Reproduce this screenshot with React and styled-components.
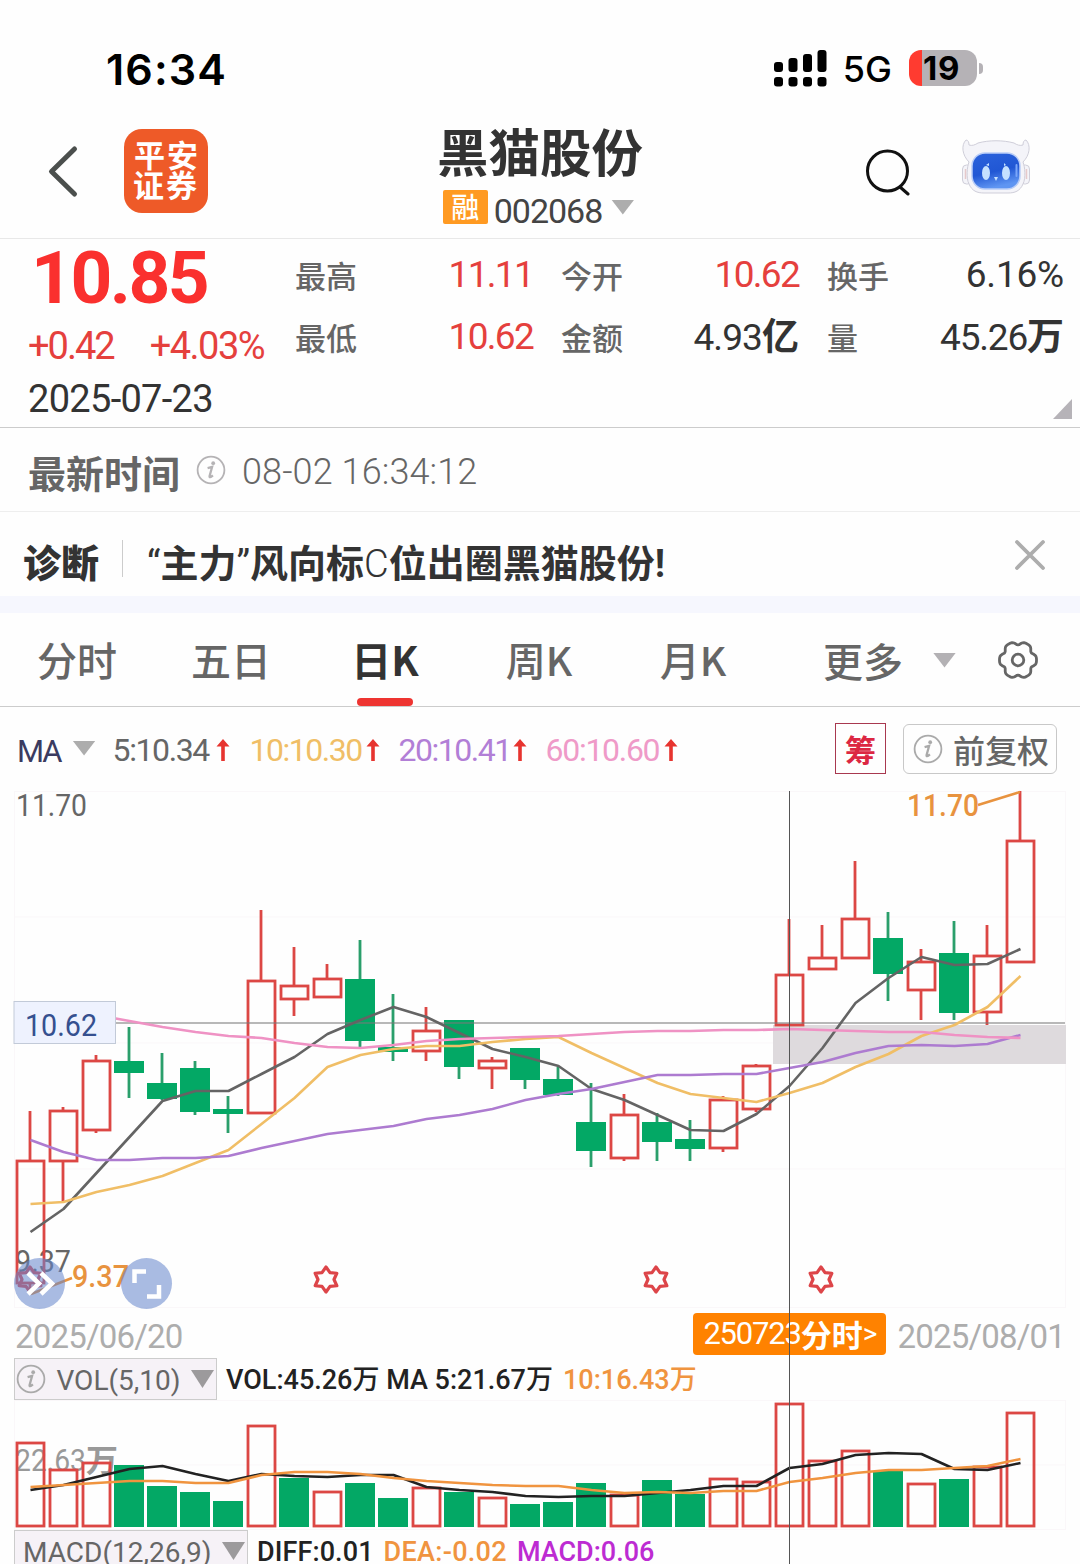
import React from 'react';
import styled, { createGlobalStyle } from 'styled-components';

const GlobalStyle = createGlobalStyle`
  * {
    box-sizing: border-box;
  }

  body {
    margin: 0;
    background: #fefefe;
    font-family: Roboto, 'Noto Sans CJK SC', sans-serif;
    color: #333;
  }
`;

const cjk = "'Noto Sans CJK SC', sans-serif";

const Screen = styled.div`
  position: relative;
  display: flex;
  flex-direction: column;
  width: 1080px;
  height: 1564px;
  overflow: hidden;
  background: #fefefe;
  white-space: nowrap;

  > * {
    flex-shrink: 0;
  }
`;

const Num = styled.span`
  font-size: ${(p) => p.$size || 37}px;
  font-weight: ${(p) => p.$weight || 400};
  letter-spacing: ${(p) => p.$track || 0}px;
  color: ${(p) => p.$color || '#333'};
  line-height: 1;
`;

const Han = styled.span`
  font-family: ${cjk};
  font-size: ${(p) => p.$size || 31}px;
  font-weight: ${(p) => p.$weight || 500};
  color: ${(p) => p.$color || '#666'};
  line-height: 1;
`;

const Triangle = styled.i`
  flex: none;
  width: 23px;
  height: ${(p) => p.$height || 15}px;
  background: ${(p) => p.$color || '#adadad'};
  clip-path: polygon(0 0, 100% 0, 50% 100%);
`;

const StatusBar = styled.div`
  display: flex;
  align-items: center;
  height: 112px;
  padding: 24px 103px 0 106px;
  font-family: Inter, sans-serif;
  color: #000;
`;

const Clock = styled.span`
  flex: 1;
  margin-top: 2px;
  font-size: 43px;
  font-weight: 600;
  letter-spacing: 1.1px;
`;

const Network = styled.span`
  margin: 1px 17px 0 16px;
  font-size: 36px;
  font-weight: 500;
`;

const Battery = styled.div`
  position: relative;
  width: 68px;
  height: 36px;
  padding-left: 14px;
  border-radius: 12px;
  background: linear-gradient(90deg, #ff3b30 13px, #b5b2b6 13px);
  font-size: 33px;
  font-weight: 700;
  letter-spacing: 0.8px;
  line-height: 36px;

  &::after {
    content: '';
    position: absolute;
    right: -6px;
    top: 13px;
    width: 4px;
    height: 11px;
    border-radius: 0 4px 4px 0;
    background: #b5b2b6;
  }
`;

const Header = styled.header`
  display: grid;
  grid-template-columns: 430px 1fr 430px;
  height: 127px;
  border-bottom: 1px solid #e8e8e8;
`;

const HeaderLeft = styled.div`
  display: flex;
  align-items: center;
  gap: 44px;
  padding: 0 0 9px 46px;
`;

const BrokerLogo = styled.div`
  display: grid;
  place-content: center;
  width: 84px;
  height: 84px;
  padding-bottom: 3px;
  border-radius: 18px;
  background: #ee5a28;
  font: 700 31px/30px ${cjk};
  letter-spacing: 2px;
  text-indent: 2px;
  color: #fff;
  text-align: center;
`;

const StockTitle = styled.div`
  display: flex;
  flex-direction: column;
  align-items: center;
`;

const StockName = styled.h1`
  margin: 9px 0 0;
  font: 700 51.5px/58px ${cjk};
  color: #333;
`;

const StockCode = styled.div`
  display: flex;
  align-items: center;
  height: 34px;
  margin: 11px 3px 0 0;
`;

const MarginBadge = styled.span`
  width: 45px;
  height: 34px;
  margin-right: 6px;
  border-radius: 2px;
  background: #ff9a22;
  font: 500 28px/32px ${cjk};
  color: #fff;
  text-align: center;
`;

const HeaderRight = styled.div`
  display: flex;
  align-items: center;
  justify-content: flex-end;
  gap: 49px;
  padding: 0 49px 9px 0;

  svg:last-child {
    margin-bottom: 7px;
  }
`;

const Quote = styled.section`
  position: relative;
  display: flex;
  height: 189px;
  border-bottom: 1px solid #ccc;
`;

const PriceColumn = styled.div`
  display: flex;
  flex-direction: column;
  width: 295px;
  padding-left: 28px;
`;

const Price = styled.div`
  margin-left: 3px;
  font-size: 73px;
  font-weight: 700;
  letter-spacing: -2.5px;
  line-height: 78px;
  color: #fa302e;
`;

const Change = styled.div`
  display: flex;
  gap: 36px;
  height: 58px;
  align-items: center;
`;

const Stats = styled.div`
  display: grid;
  grid-template-columns: 238px 238px 237px;
  grid-auto-rows: 62px;
  column-gap: 28px;
  padding-top: 4px;
`;

const Stat = styled.div`
  display: flex;
  align-items: center;
  justify-content: space-between;
`;

const Corner = styled.i`
  position: absolute;
  right: 8px;
  bottom: 8px;
  width: 19px;
  height: 20px;
  background: #b6b3b8;
  clip-path: polygon(100% 0, 100% 100%, 0 100%);
`;

const UpdateRow = styled.div`
  display: flex;
  align-items: center;
  height: 84px;
  padding: 4px 0 0 28px;
  border-bottom: 1px solid #eee;
`;

const Diagnose = styled.div`
  display: flex;
  align-items: center;
  height: 84px;
  padding: 0 34px 0 23px;
`;

const DiagnoseText = styled.p`
  flex: 1;
  margin: 19px 0 0;
  padding-left: 24px;
  font: 700 38px/1 Roboto, ${cjk};
  color: #333;
`;

const Rule = styled.i`
  width: 1px;
  height: 37px;
  margin: 9px 0 0 23px;
  background: #ccc;
`;

const Band = styled.div`
  height: 17px;
  background: #f6f7fe;
`;

const Tabs = styled.nav`
  display: flex;
  height: 94px;
  border-bottom: 1px solid #ccc;
`;

const Tab = styled.button`
  display: flex;
  flex-direction: column;
  align-items: center;
  justify-content: flex-end;
  width: 154px;
  padding: 0;
  border: 0;
  background: none;
  font: ${(p) => (p.$active ? 700 : 500)} 40px/46px ${cjk};
  color: ${(p) => (p.$active ? '#333' : '#666')};

  &::after {
    content: '';
    width: 56px;
    height: 8px;
    margin-top: 16px;
    border-radius: 4px;
    background: ${(p) => (p.$active ? '#ee3431' : 'transparent')};
  }
`;

const More = styled.div`
  display: flex;
  align-items: center;
  padding: 1px 0 0 53px;
`;

const MaRow = styled.div`
  display: flex;
  align-items: center;
  height: 84px;
  padding: 0 23px 0 17px;
`;

const MaItem = styled.div`
  display: flex;
  align-items: center;
  width: ${(p) => p.$width}px;
  padding-top: 2px;
`;

const ChipButton = styled.div`
  display: grid;
  place-items: center;
  width: 51px;
  height: 51px;
  margin: -1px 17px 0 auto;
  border: 1px solid #a8384f;
`;

const AdjustButton = styled.div`
  display: flex;
  align-items: center;
  justify-content: space-between;
  width: 154px;
  height: 50px;
  padding: 0 7px 0 9px;
  border: 1px solid #c8c8c8;
  border-radius: 6px;
`;

const Chart = styled.svg`
  display: block;
  overflow: visible;
  font-family: Roboto, ${cjk};
`;

const DateRow = styled.div`
  display: flex;
  align-items: center;
  height: 50px;
  padding: 6px 15px 0 15px;
`;

const DayTag = styled.div`
  display: flex;
  align-items: center;
  width: 193px;
  height: 42px;
  margin: 0 11px 5px auto;
  padding-left: 10px;
  border-radius: 4px;
  background: #ff8200;
`;

const IndicatorRow = styled.div`
  display: flex;
  align-items: center;
  height: ${(p) => p.$height}px;
  padding-left: 14px;
`;

const IndicatorValues = styled.div`
  display: flex;
  gap: 10px;
  padding-top: 3px;
`;

const IndicatorSelect = styled.div`
  display: flex;
  align-items: center;
  justify-content: space-between;
  width: ${(p) => p.$width}px;
  height: 42px;
  margin-right: 9px;
  padding: 0 2px;
  padding-left: ${(p) => p.$indent}px;
  border: 1px solid #ccc;
  background: #f6f2f7;
`;

const Crosshair = styled.i`
  position: absolute;
  left: 789px;
  top: 791px;
  bottom: 0;
  width: 1px;
  background: #555;
`;

const InfoIcon = ({ color = '#b5b3b5' }) => (
  <svg width="30" height="30" viewBox="0 0 30 30" fill="none" stroke={color}>
    <circle cx="15" cy="15" r="13.4" strokeWidth="1.8" />
    <circle cx="17.2" cy="8.2" r="1.9" fill={color} stroke="none" />
    <path d="M11.600 13.200l4.500-1.200-2.500 9c-.3 1.500.8 1.600 3.300-.6" strokeWidth="2.300" />
  </svg>
);

const UpArrow = () => (
  <svg width="14" height="24" viewBox="0 0 14 24">
    <path d="M7 1l6.500 7.500H8.800V23H5.200V8.500H.5z" fill="#e7342f" />
  </svg>
);

const SignalIcon = () => (
  <svg width="53" height="38" viewBox="0 0 53 38">
    {[10, 14, 18, 22].map((h, i) => (
      <g key={h}>
        <rect x={i * 14.5} y={23 - h} width="9" height={h} rx="3" />
        <rect x={i * 14.5} y="28" width="9" height="9.5" rx="3" />
      </g>
    ))}
  </svg>
);

const RobotIcon = () => (
  <svg width="70" height="56" viewBox="0 0 70 56">
    <defs>
      <linearGradient id="face" x1="0" y1="0" x2="0.3" y2="1">
        <stop offset="0" stopColor="#2a62dc" />
        <stop offset="0.6" stopColor="#2157d4" />
        <stop offset="1" stopColor="#5f95f2" />
      </linearGradient>
    </defs>
    <g fill="#f4f4f9" stroke="#cfced9" strokeWidth="1">
      <rect x="1.5" y="26" width="9" height="19" rx="4" />
      <rect x="59.5" y="26" width="9" height="19" rx="4" />
      <path d="M8 23C1 16 0 6 5 1c2 0 3 2 3 5 3 1 6 0 9-2 11-3 25-3 36 0 3 2 6 3 9 2 0-3 1-5 3-5 5 5 4 15-3 22 2 5 3 16 0 22-3 7-8 9-15 9H23c-7 0-12-2-15-9-3-6-2-17 0-22z" />
    </g>
    <path d="M4.5 30v10M65.5 30v10" stroke="#e6c9cb" strokeWidth="1.5" />
    <rect x="11" y="14" width="48" height="36" rx="13" fill="url(#face)" stroke="#b9cdf7" strokeWidth="1.5" />
    <g fill="#c5e1ff">
      <ellipse cx="25" cy="34" rx="4" ry="7" />
      <ellipse cx="45" cy="34" rx="4" ry="7" />
      <path d="M33 38h4l-2 4z" />
      <path d="M25 26l3-2v3zM45 26l-2-2v3z" />
    </g>
    <path d="M55.500 26v11" stroke="#7aa6fa" strokeWidth="2" strokeLinecap="round" />
  </svg>
);

const gearPoints = Array.from({ length: 96 }, (_, i) => {
  const a = (i / 96) * Math.PI * 2;
  const wave = Math.cos(a * 6);
  const r = 17.3 + 1.7 * wave - 0.5 * Math.cos(a * 12);
  return `${(20 + r * Math.cos(a)).toFixed(2)},${(20 + r * Math.sin(a)).toFixed(2)}`;
}).join(' ');

const GearIcon = () => (
  <svg width="40" height="40" viewBox="0 0 40 40" fill="none" stroke="#666" strokeWidth="2.8">
    <polygon points={gearPoints} strokeLinejoin="round" />
    <circle cx="20" cy="20" r="5.800" />
  </svg>
);

const RED = '#dc4744';
const GREEN = '#03a865';
const STEP = 33;
const xAt = (i) => 30.5 + STEP * i;

// [up, high, body top, body bottom, low, volume top]
const candles = [
  [1, 1111, 1161, 1283, 1294, 1443],
  [1, 1107, 1111, 1161, 1202, 1470],
  [1, 1055, 1061, 1130, 1133, 1463],
  [0, 1027, 1061, 1073, 1098, 1465],
  [0, 1053, 1083, 1099, 1100, 1486],
  [0, 1061, 1068, 1112, 1115, 1492],
  [0, 1096, 1109, 1114, 1133, 1501],
  [1, 910, 981, 1113, 1113, 1426],
  [1, 947, 986, 999, 1016, 1478],
  [1, 964, 979, 997, 997, 1492],
  [0, 940, 979, 1041, 1047, 1483],
  [0, 994, 1047, 1052, 1061, 1498],
  [1, 1007, 1031, 1051, 1061, 1488],
  [0, 1020, 1020, 1067, 1079, 1492],
  [1, 1057, 1061, 1068, 1089, 1498],
  [0, 1048, 1048, 1080, 1089, 1504],
  [0, 1067, 1079, 1095, 1096, 1502],
  [0, 1083, 1122, 1151, 1167, 1483],
  [1, 1094, 1115, 1158, 1161, 1495],
  [0, 1113, 1122, 1142, 1161, 1480],
  [0, 1120, 1139, 1149, 1161, 1494],
  [1, 1096, 1100, 1148, 1152, 1479],
  [1, 1064, 1066, 1109, 1112, 1482],
  [1, 919, 975, 1025, 1025, 1404],
  [1, 925, 958, 969, 969, 1461],
  [1, 861, 919, 958, 958, 1451],
  [0, 912, 938, 974, 1001, 1471],
  [1, 949, 962, 990, 1020, 1484],
  [0, 921, 953, 1013, 1020, 1479],
  [1, 925, 956, 1012, 1025, 1467],
  [1, 791, 841, 962, 962, 1413],
];
// the ninth bar closed above the open but its volume bar is green
const volumeDown = (c, i) => !c[0] || i === 8;

const ma5 = [1232, 1209, 1173, 1137, 1101, 1091, 1091, 1074, 1057, 1034, 1020, 1007, 1017, 1033, 1049, 1057, 1066, 1089, 1100, 1115, 1130, 1131, 1114, 1086, 1048, 1003, 978, 957, 965, 964, 949];
const ma10 = [1204, 1202, 1192, 1185, 1176, 1163, 1150, 1124, 1098, 1067, 1055, 1049, 1046, 1046, 1042, 1039, 1037, 1053, 1068, 1083, 1094, 1098, 1102, 1093, 1083, 1067, 1054, 1036, 1025, 1007, 976];
const ma20 = [1140, 1152, 1160, 1160, 1158, 1158, 1156, 1148, 1141, 1134, 1130, 1126, 1119, 1115, 1109, 1100, 1094, 1089, 1082, 1075, 1075, 1074, 1074, 1068, 1062, 1053, 1046, 1045, 1046, 1044, 1035];
const ma60 = [1006, 1010, 1015, 1021, 1027, 1032, 1036, 1038, 1043, 1047, 1048, 1045, 1041, 1039, 1038, 1037, 1036, 1034, 1032, 1031, 1031, 1030, 1030, 1029, 1030, 1031, 1032, 1032, 1035, 1037, 1038];
const volMa5 = [1490, 1485, 1477, 1469, 1466, 1474, 1481, 1474, 1476, 1477, 1475, 1475, 1487, 1490, 1492, 1496, 1497, 1496, 1496, 1493, 1490, 1486, 1486, 1468, 1464, 1455, 1453, 1454, 1469, 1470, 1463];
const volMa10 = [1487, 1485, 1483, 1481, 1481, 1483, 1483, 1475, 1472, 1472, 1474, 1478, 1481, 1483, 1485, 1486, 1486, 1490, 1493, 1492, 1493, 1491, 1491, 1482, 1478, 1473, 1470, 1470, 1468, 1466, 1459];

const Line = ({ data, color, from = 0 }) => (
  <polyline
    points={data.slice(from).map((y, i) => `${xAt(i + from)},${y}`).join(' ')}
    fill="none"
    stroke={color}
    strokeWidth="2.600"
    strokeLinejoin="round"
  />
);

const Label = ({ x, y, width, color, size = 31, weight = 400, children }) => (
  <text x={x} y={y} fontSize={size} fontWeight={weight} fill={color} textLength={width} lengthAdjust="spacingAndGlyphs">
    {children}
  </text>
);

const starPoints = Array.from({ length: 12 }, (_, i) => {
  const r = i % 2 ? 8 : 12.5;
  const a = (i * Math.PI) / 6 - Math.PI / 2;
  return `${(r * Math.cos(a)).toFixed(2)},${(r * Math.sin(a)).toFixed(2)}`;
}).join(' ');

const KLineChart = () => (
  <Chart width="1080" height="517" viewBox="0 791 1080 517">
    <g stroke="#faf7f9">
      <path d="M14.500 791V1308M1065.500 791V1308" />
      {[791.5, 917, 1043, 1169, 1307.5].map((y) => (
        <path key={y} d={`M14 ${y}H1066`} />
      ))}
    </g>
    <rect x="773" y="1025" width="293" height="39" fill="#dedadd" />
    <Label x={16} y={816} width={71} color="#666">11.70</Label>
    <Label x={15} y={1272} width={56} color="#666">9.37</Label>
    {candles.map(([up, high, top, bottom, low], i) => (
      <g key={i} stroke={up ? RED : '#2a9f6b'} strokeWidth="2.800">
        <path d={`M${xAt(i) - 0.5} ${high}V${top}M${xAt(i) - 0.5} ${bottom}V${low}`} />
        <rect
          x={xAt(i) - (up ? 13.5 : 15.5)}
          y={top}
          width={up ? 27 : 30}
          height={bottom - top}
          fill={up ? 'none' : GREEN}
          stroke={up ? RED : 'none'}
        />
      </g>
    ))}
    <path d="M14 1023H1065" stroke="#777" strokeOpacity="0.700" strokeWidth="1.500" />
    <Line data={ma5} color="#646464" />
    <Line data={ma10} color="#f0be66" />
    <Line data={ma20} color="#ad7bd0" />
    <Line data={ma60} color="#ef92c4" from={2} />
    <rect x="14" y="1001.500" width="101.500" height="42" fill="#eef2fe" stroke="#c2cad8" />
    <Label x={25} y={1036} width={72} color="#35508f">10.62</Label>
    <path d="M978 805L1020 792M31 1294L72 1278" stroke="#e8933f" strokeWidth="2.500" />
    <Label x={907} y={816} width={72} color="#e8933f" weight={500}>11.70</Label>
    <Label x={72} y={1287} width={57} color="#e8933f" weight={500}>9.37</Label>
    {[30, 326, 656, 821].map((x) => (
      <polygon key={x} points={starPoints} transform={`translate(${x} 1279.500)`} fill="none" stroke="#dd4549" strokeWidth="3.200" strokeLinejoin="round" />
    ))}
    <g fill="#6585cb" fillOpacity="0.560">
      <circle cx="39.500" cy="1283.500" r="25.500" />
      <circle cx="146.500" cy="1283.500" r="25.500" />
    </g>
    <g fill="none" stroke="#fff" strokeWidth="4.500">
      <path d="M28 1273l11 10.500-11 10.500M41 1273l11 10.500-11 10.500" />
      <path d="M134.500 1283v-11.500H146M159 1285v11.500h-12" />
    </g>
  </Chart>
);

const VolumeChart = () => (
  <Chart width="1080" height="130" viewBox="0 1400 1080 130">
    <g stroke="#faf7f9">
      <path d="M14 1400.500H1066M14 1465H1066M14 1529.500H1066M14.500 1400V1530M1065.500 1400V1530" />
    </g>
    <Label x={15} y={1471} width={71} color="#999">22.63</Label>
    <Label x={86} y={1472} width={32} color="#999" size={32} weight={700}>万</Label>
    {candles.map((c, i) =>
      volumeDown(c, i) ? (
        <rect key={i} x={xAt(i) - 15.5} y={c[5]} width="30" height={1527 - c[5]} fill={GREEN} />
      ) : (
        <rect key={i} x={xAt(i) - 13.5} y={c[5]} width="27" height={1526 - c[5]} fill="none" stroke={RED} strokeWidth="2.800" />
      )
    )}
    <Line data={volMa5} color="#222" />
    <Line data={volMa10} color="#f0943f" />
  </Chart>
);

const stats = [
  { label: '最高', value: '11.11', up: true },
  { label: '今开', value: '10.62', up: true },
  { label: '换手', value: '6.16%', track: -0.2 },
  { label: '最低', value: '10.62', up: true },
  { label: '金额', value: '4.93', unit: '亿', track: -0.9 },
  { label: '量', value: '45.26', unit: '万', track: -1.2 },
];

const averages = [
  { text: '5:10.34', color: '#666', width: 137, gap: 7, track: -1.4 },
  { text: '10:10.30', color: '#f0be66', width: 149, gap: 4, track: -1.5 },
  { text: '20:10.41', color: '#b27fd6', width: 147, gap: 2, track: -1.5 },
  { text: '60:10.60', color: '#ef9ac8', width: 140, gap: 5, track: -1.3 },
];

const App = () => (
  <>
    <GlobalStyle />
    <Screen>
      <StatusBar>
        <Clock>16:34</Clock>
        <SignalIcon />
        <Network>5G</Network>
        <Battery>19</Battery>
      </StatusBar>

      <Header>
        <HeaderLeft>
          <svg width="34" height="54" viewBox="0 0 34 54">
            <path d="M28.500 5L5.500 27.500l23 22.500" fill="none" stroke="#4b4f4d" strokeWidth="5" strokeLinecap="round" strokeLinejoin="round" />
          </svg>
          <BrokerLogo>
            平安
            <br />
            证券
          </BrokerLogo>
        </HeaderLeft>
        <StockTitle>
          <StockName>黑猫股份</StockName>
          <StockCode>
            <MarginBadge>融</MarginBadge>
            <Num $size={34} $track={-1} $color="#444" style={{ marginTop: 7 }}>002068</Num>
            <Triangle style={{ marginLeft: 9 }} />
          </StockCode>
        </StockTitle>
        <HeaderRight>
          <svg width="48" height="50" viewBox="0 0 48 50" fill="none" stroke="#111" strokeWidth="3">
            <circle cx="23.500" cy="25" r="20" />
            <path d="M36 41l8 7" strokeLinecap="round" />
          </svg>
          <RobotIcon />
        </HeaderRight>
      </Header>

      <Quote>
        <PriceColumn>
          <Price>10.85</Price>
          <Change>
            <Num $size={38} $track={-2} $color="#e5403d">+0.42</Num>
            <Num $size={38} $track={-1.5} $color="#e5403d">+4.03%</Num>
          </Change>
          <Num $size={38} $track={-0.7} style={{ lineHeight: '48px' }}>2025-07-23</Num>
        </PriceColumn>
        <Stats>
          {stats.map((s, i) => (
            <Stat key={i}>
              <Han>{s.label}</Han>
              <span>
                <Num $track={s.track ?? -1.7} $color={s.up ? '#e5403d' : '#333'}>{s.value}</Num>
                {s.unit && <Han $size={37} $weight={700} $color="#333">{s.unit}</Han>}
              </span>
            </Stat>
          ))}
        </Stats>
        <Corner />
      </Quote>

      <UpdateRow>
        <Han $size={38} $weight={700}>最新时间</Han>
        <span style={{ margin: '0 16px' }}>
          <InfoIcon />
        </span>
        <Num $size={36} $weight={300} $track={0.1} $color="#666">08-02 16:34:12</Num>
      </UpdateRow>

      <Diagnose>
        <Han $size={38} $weight={900} $color="#333" style={{ marginTop: 13 }}>诊断</Han>
        <Rule />
        <DiagnoseText>
          <Num $size={38}>“</Num>主力<Num $size={38}>”</Num>风向标<Num $size={38} $weight={300}>C</Num>位出圈黑猫股份!
        </DiagnoseText>
        <svg width="32" height="32" viewBox="0 0 32 32">
          <path d="M3 4l26 26M29 4L3 30" stroke="#adadad" strokeWidth="3.800" strokeLinecap="round" />
        </svg>
      </Diagnose>

      <Band />

      <Tabs>
        {['分时', '五日', '日K', '周K', '月K'].map((name) => (
          <Tab key={name} $active={name === '日K'}>{name}</Tab>
        ))}
        <More>
          <Han $size={40}>更多</Han>
          <Triangle $color="#b3b1b4" style={{ margin: '0 42px 0 30px' }} />
          <GearIcon />
        </More>
      </Tabs>

      <MaRow>
        <Num $size={31} $track={-2} $color="#3b3b60" style={{ marginTop: 4 }}>MA</Num>
        <Triangle style={{ margin: '0 17px 2px 12px' }} />
        {averages.map((a) => (
          <MaItem key={a.text} $width={a.width}>
            <Num $size={32} $track={a.track} $color={a.color} style={{ marginRight: a.gap }}>{a.text}</Num>
            <UpArrow />
          </MaItem>
        ))}
        <ChipButton>
          <Han $weight={700} $color="#dc2742">筹</Han>
        </ChipButton>
        <AdjustButton>
          <InfoIcon color="#aaa" />
          <Han $size={32}>前复权</Han>
        </AdjustButton>
      </MaRow>

      <KLineChart />

      <DateRow>
        <Num $size={33} $track={-0.8} $color="#adadad">2025/06/20</Num>
        <DayTag>
          <Num $size={31} $track={-1.2} $color="#fff">250723</Num>
          <Han $size={31} $weight={700} $color="#fff">分时</Han>
          <Num $size={28} $color="#fff">&gt;</Num>
        </DayTag>
        <Num $size={33} $track={-0.8} $color="#adadad">2025/08/01</Num>
      </DateRow>

      <IndicatorRow $height={42}>
        <IndicatorSelect $width={203} $indent={1}>
          <InfoIcon color="#aaa" />
          <Num $size={28} $color="#666" style={{ marginTop: 4 }}>VOL(5,10)</Num>
          <Triangle $height={18} $color="#9c9a9c" />
        </IndicatorSelect>
        <IndicatorValues>
          <Num $size={27} $weight={500} $color="#222">VOL:45.26万 MA 5:21.67万</Num>
          <Num $size={27} $weight={500} $color="#f0943f">10:16.43万</Num>
        </IndicatorValues>
      </IndicatorRow>

      <VolumeChart />

      <IndicatorRow $height={42}>
        <IndicatorSelect $width={234} $indent={8}>
          <Num $size={28} $color="#666" style={{ marginTop: 4 }}>MACD(12,26,9)</Num>
          <Triangle $height={18} $color="#9c9a9c" />
        </IndicatorSelect>
        <IndicatorValues>
          <Num $size={27} $weight={500} $track={0.1} $color="#222">DIFF:0.01</Num>
          <Num $size={27} $weight={500} $track={0.3} $color="#f0943f">DEA:-0.02</Num>
          <Num $size={27} $weight={500} $color="#bd2bd2">MACD:0.06</Num>
        </IndicatorValues>
      </IndicatorRow>

      <Crosshair />
    </Screen>
  </>
);

export default App;
